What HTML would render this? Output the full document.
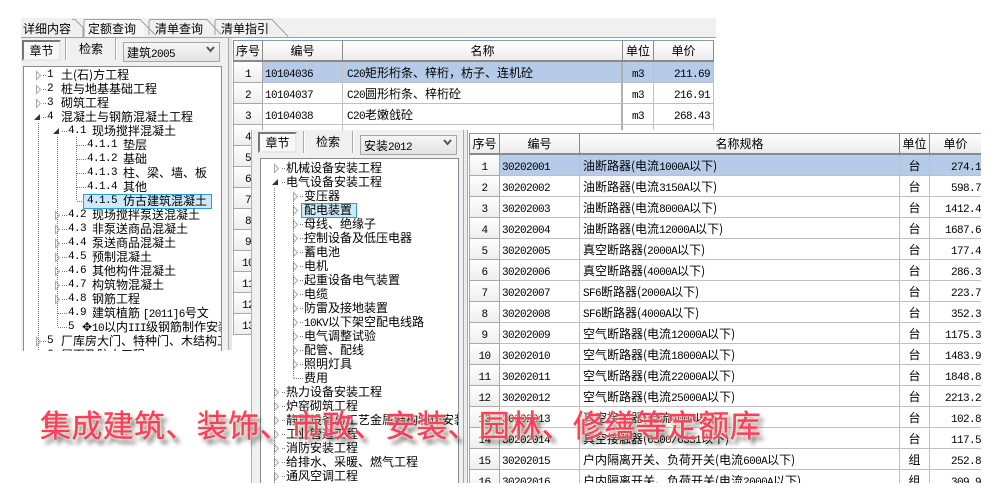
<!DOCTYPE html>
<html lang="zh-CN"><head><meta charset="utf-8"><title>定额库</title>
<style>
html,body{margin:0;padding:0;background:#fff;overflow:hidden}
body{width:1000px;height:500px;position:relative;overflow:hidden;font:12px/14px "WenQuanYi Zen Hei","Noto Sans CJK SC",sans-serif;color:#000}
i{font:11px/14px "Liberation Mono",monospace;letter-spacing:-.6px;color:#000}
.a{position:absolute}
.panel{background:#f0f0f0}
.btn{position:absolute;box-sizing:border-box;height:21px;width:39px;border:2px solid #e8e8e8;border-top-color:#777;border-left-color:#777;background:#f8f8f8;text-align:center;line-height:17px}
.sep{position:absolute;width:1px;height:22px;background:#aaa;border-right:1px solid #fff}
.sel{position:absolute;box-sizing:border-box;width:97px;height:20px;border:1px solid #a5a5a5;background:linear-gradient(#f6f6f6,#e4e4e4);line-height:20px;padding-left:3px}
.sel i{line-height:0}
.box{position:absolute;box-sizing:border-box;width:199px;background:#fff;border:1px solid #838a94;overflow:hidden}
.r{position:relative;height:14px;line-height:14px;white-space:nowrap}
.r b{font-weight:normal;position:absolute;top:0}
.r i{position:absolute;top:0}
.r b i{position:static;line-height:0}
.hl{position:absolute;box-sizing:border-box;background:#cde8f6;border:1px solid #2a9fdc}
table{border-collapse:separate;border-spacing:0;table-layout:fixed;position:absolute}
td{box-sizing:border-box;height:21px;padding:0;border-right:1px solid #c0c0c0;border-bottom:1px solid #c0c0c0;white-space:nowrap;overflow:hidden;line-height:19px}
td i{line-height:0}
tr.h td{background:linear-gradient(#fff,#ececec);text-align:center;border-right:1px solid #8a8a8a;border-bottom:2px solid #8a8a8a;border-top:1px solid #7f9db9}
td.n{background:linear-gradient(#fff,#eee);text-align:center;border-right:1px solid #a8a8a8;border-bottom:1px solid #a8a8a8;border-left:1px solid #a8a8a8}
tr.h td.n{border-left:1px solid #8a8a8a}
td.t{padding-left:2px}
td.c{text-align:center}
td.p{text-align:right;padding-right:3px}
tr.s td:not(.n){background:#b5cbe8}
td.sp{border-right:2px solid #b0b0b0}
#t2 td.p{padding-right:0;border-right:0}
#head{position:absolute;left:40px;top:404px;font:31px/40px "Noto Sans CJK SC",sans-serif;letter-spacing:.35px;color:#fb3b6b;-webkit-text-stroke:.3px #fb3b6b;white-space:nowrap;text-shadow:0 0 2px #fffbc0,0 0 3px #fffbc0,4px 5px 4px rgba(0,0,0,.6)}
</style></head><body>

<!-- window 1 -->
<div class="a panel" style="left:21px;top:18px;width:695px;height:20px"></div>
<div class="a panel" style="left:21px;top:38px;width:207px;height:312px"></div>
<div class="a" style="left:84px;top:20px;width:60px;height:18px;background:#f8f8f8"></div>
<div class="a" style="left:23px;top:22px">详细内容</div>
<div class="a" style="left:88px;top:22px">定额查询</div>
<div class="a" style="left:155px;top:22px">清单查询</div>
<div class="a" style="left:221px;top:22px">清单指引</div>
<svg class="a" style="left:0;top:0" width="1000" height="60"><path d="M21 37.500H716M72 19.500h3l8 8v10M84 37V21q0-1.500 1-1.500h55l16 16M149 35v-13q0-2.500 2-2.500h56l14 15M215 35v-13q0-2.500 2-2.500h55l16 17" fill="none" stroke="#a0a0a0"/></svg>
<div class="btn" style="left:22px;top:40px">章节</div>
<div class="sep" style="left:65px;top:38px"></div>
<div class="a" style="left:79px;top:42px">检索</div>
<div class="sep" style="left:115px;top:38px"></div>
<div class="sel" style="left:123px;top:42px">建筑<i>2005</i></div>
<div class="box" style="left:23px;top:66px;height:285px;border-bottom:0">
<div style="height:1px"></div>
<div class="r"><i style="left:23px">1</i><b style="left:37px">土(石)方工程</b></div>
<div class="r"><i style="left:23px">2</i><b style="left:37px">桩与地基基础工程</b></div>
<div class="r"><i style="left:23px">3</i><b style="left:37px">砌筑工程</b></div>
<div class="r"><i style="left:23px">4</i><b style="left:37px">混凝土与钢筋混凝土工程</b></div>
<div class="r"><i style="left:44px">4.1</i><b style="left:68px">现场搅拌混凝土</b></div>
<div class="r"><i style="left:63px">4.1.1</i><b style="left:99px">垫层</b></div>
<div class="r"><i style="left:63px">4.1.2</i><b style="left:99px">基础</b></div>
<div class="r"><i style="left:63px">4.1.3</i><b style="left:99px">柱、梁、墙、板</b></div>
<div class="r"><i style="left:63px">4.1.4</i><b style="left:99px">其他</b></div>
<div class="hl" style="left:59px;top:127px;width:129px;height:15px"></div>
<div class="r"><i style="left:63px">4.1.5</i><b style="left:99px">仿古建筑混凝土</b></div>
<div class="r"><i style="left:44px">4.2</i><b style="left:68px">现场搅拌泵送混凝土</b></div>
<div class="r"><i style="left:44px">4.3</i><b style="left:68px">非泵送商品混凝土</b></div>
<div class="r"><i style="left:44px">4.4</i><b style="left:68px">泵送商品混凝土</b></div>
<div class="r"><i style="left:44px">4.5</i><b style="left:68px">预制混凝土</b></div>
<div class="r"><i style="left:44px">4.6</i><b style="left:68px">其他构件混凝土</b></div>
<div class="r"><i style="left:44px">4.7</i><b style="left:68px">构筑物混凝土</b></div>
<div class="r"><i style="left:44px">4.8</i><b style="left:68px">钢筋工程</b></div>
<div class="r"><i style="left:44px">4.9</i><b style="left:68px">建筑植筋 <i>[2011]6</i>号文</b></div>
<div class="r"><i style="left:44px">5</i><b style="left:58px">✥</b><b style="left:68px"><i>10</i>以内<i>III</i>级钢筋制作安装</b></div>
<div class="r"><i style="left:23px">5</i><b style="left:37px">厂库房大门、特种门、木结构工程</b></div>
<div class="r"><i style="left:23px">6</i><b style="left:37px">屋面及防水工程</b></div>
</div>
<svg class="a" style="left:0;top:0" width="250" height="352" shape-rendering="crispEdges">
<path d="M36.500 71.500v8l4-4zM36.500 85.500v8l4-4zM36.500 99.500v8l4-4zM36.500 337.500v8l4-4zM55.500 211.500v8l4-4zM55.500 225.500v8l4-4zM55.500 239.500v8l4-4zM55.500 253.500v8l4-4zM55.500 267.500v8l4-4zM55.500 281.500v8l4-4zM55.500 295.500v8l4-4z" fill="#fff" stroke="#a8a8a8" shape-rendering="auto"/>
<path d="M40 114v6h-6zM59 128v6h-6z" fill="#333" shape-rendering="auto"/>
<path d="M38.500 123V350M57.500 137V327M76.500 137V201M43 75.500h4M43 89.500h4M43 103.500h4M43 117.500h4M43 341.500h4M62 131.500h5M62 215.500h5M62 229.500h5M62 243.500h5M62 257.500h5M62 271.500h5M62 285.500h5M62 299.500h5M58 313.500h9M58 327.500h9M77 145.500h9M77 159.500h9M77 173.500h9M77 187.500h9M77 201.500h6" fill="none" stroke="#777" stroke-dasharray="1 1"/>
</svg>

<div class="a" style="left:228px;top:38px;width:4px;height:312px;background:#e6e6e6;border-left:1px solid #a8a8a8;box-sizing:border-box"></div>

<table style="left:233px;top:40px;width:481px">
<colgroup><col width="30"><col width="80"><col width="280"><col width="31"><col width="60"></colgroup>
<tr class="h" style="height:22px"><td class="n" style="height:22px">序号</td><td style="height:22px">编号</td><td style="height:22px">名称</td><td style="height:22px">单位</td><td style="height:22px">单价</td></tr>
<tr class="s"><td class="n"><i>1</i></td><td class="t"><i>10104036</i></td><td class="t sp" style="padding-left:4px"><i>C20</i>矩形桁条、梓桁，枋子、连机砼</td><td class="c"><i>m3</i></td><td class="p"><i>211.69</i></td></tr>
<tr><td class="n"><i>2</i></td><td class="t"><i>10104037</i></td><td class="t sp" style="padding-left:4px"><i>C20</i>圆形桁条、梓桁砼</td><td class="c"><i>m3</i></td><td class="p"><i>216.91</i></td></tr>
<tr><td class="n"><i>3</i></td><td class="t"><i>10104038</i></td><td class="t sp" style="padding-left:4px"><i>C20</i>老嫩戗砼</td><td class="c"><i>m3</i></td><td class="p"><i>268.43</i></td></tr>
<tr><td class="n"><i>4</i></td><td class="t"></td><td class="t sp"></td><td></td><td></td></tr>
<tr><td class="n"><i>5</i></td><td colspan="4" style="border:0"></td></tr>
<tr><td class="n"><i>6</i></td><td colspan="4" style="border:0"></td></tr>
<tr><td class="n"><i>7</i></td><td colspan="4" style="border:0"></td></tr>
<tr><td class="n"><i>8</i></td><td colspan="4" style="border:0"></td></tr>
<tr><td class="n"><i>9</i></td><td colspan="4" style="border:0"></td></tr>
<tr><td class="n"><i>10</i></td><td colspan="4" style="border:0"></td></tr>
<tr><td class="n"><i>11</i></td><td colspan="4" style="border:0"></td></tr>
<tr><td class="n"><i>12</i></td><td colspan="4" style="border:0"></td></tr>
<tr><td class="n"><i>13</i></td><td colspan="4" style="border:0"></td></tr>
</table>

<!-- window 2 -->
<div class="a" style="left:251px;top:130px;width:730px;height:353px;background:#fff;overflow:hidden"></div>
<div class="a panel" style="left:251px;top:130px;width:217px;height:353px;border-left:1px solid #b0b0b0;box-sizing:border-box"></div>
<div class="btn" style="left:258px;top:132px">章节</div>
<div class="sep" style="left:303px;top:131px"></div>
<div class="a" style="left:316px;top:135px">检索</div>
<div class="sep" style="left:352px;top:131px"></div>
<div class="sel" style="left:360px;top:135px">安装<i>2012</i></div>
<div class="box" style="left:260px;top:158px;height:325px;border-bottom:0">
<div style="height:2px"></div>
<div class="r"><b style="left:25px">机械设备安装工程</b></div>
<div class="r"><b style="left:25px">电气设备安装工程</b></div>
<div class="r"><b style="left:43px">变压器</b></div>
<div class="hl" style="left:40px;top:44px;width:56px;height:15px"></div>
<div class="r"><b style="left:43px">配电装置</b></div>
<div class="r"><b style="left:43px">母线、绝缘子</b></div>
<div class="r"><b style="left:43px">控制设备及低压电器</b></div>
<div class="r"><b style="left:43px">蓄电池</b></div>
<div class="r"><b style="left:43px">电机</b></div>
<div class="r"><b style="left:43px">起重设备电气装置</b></div>
<div class="r"><b style="left:43px">电缆</b></div>
<div class="r"><b style="left:43px">防雷及接地装置</b></div>
<div class="r"><b style="left:43px"><i>10KV</i>以下架空配电线路</b></div>
<div class="r"><b style="left:43px">电气调整试验</b></div>
<div class="r"><b style="left:43px">配管、配线</b></div>
<div class="r"><b style="left:43px">照明灯具</b></div>
<div class="r"><b style="left:43px">费用</b></div>
<div class="r"><b style="left:25px">热力设备安装工程</b></div>
<div class="r"><b style="left:25px">炉窑砌筑工程</b></div>
<div class="r"><b style="left:25px">静置设备与工艺金属结构制作安装工程</b></div>
<div class="r"><b style="left:25px">工业管道工程</b></div>
<div class="r"><b style="left:25px">消防安装工程</b></div>
<div class="r"><b style="left:25px">给排水、采暖、燃气工程</b></div>
<div class="r"><b style="left:25px">通风空调工程</b></div>
</div>
<svg class="a" style="left:0;top:0" width="480" height="484" shape-rendering="crispEdges">
<path d="M274.500 164.500v8l4-4zM274.500 388.500v8l4-4zM274.500 402.500v8l4-4zM274.500 416.500v8l4-4zM274.500 430.500v8l4-4zM274.500 444.500v8l4-4zM274.500 458.500v8l4-4zM274.500 472.500v8l4-4zM293.500 192.500v8l4-4zM293.500 206.500v8l4-4zM293.500 220.500v8l4-4zM293.500 234.500v8l4-4zM293.500 248.500v8l4-4zM293.500 262.500v8l4-4zM293.500 276.500v8l4-4zM293.500 290.500v8l4-4zM293.500 304.500v8l4-4zM293.500 318.500v8l4-4zM293.500 332.500v8l4-4zM293.500 346.500v8l4-4zM293.500 360.500v8l4-4z" fill="#fff" stroke="#a8a8a8" shape-rendering="auto"/>
<path d="M278 179v6h-6z" fill="#333" shape-rendering="auto"/>
<path d="M274.500 188V483M293.500 201V378M282 168.500h3M282 182.500h3M282 392.500h3M282 406.500h3M282 420.500h3M282 434.500h3M282 448.500h3M282 462.500h3M282 476.500h3M300 196.500h3M300 224.500h3M300 238.500h3M300 252.500h3M300 266.500h3M300 280.500h3M300 294.500h3M300 308.500h3M300 322.500h3M300 336.500h3M300 350.500h3M300 364.500h3M294 378.500h9" fill="none" stroke="#777" stroke-dasharray="1 1"/>
</svg>
<div class="a" style="left:463px;top:130px;width:5px;height:353px;background:#ececec;border-left:1px solid #a8a8a8;border-right:1px solid #a8a8a8;box-sizing:border-box"></div>

<div class="a" style="left:469px;top:133px;width:512px;height:350px;overflow:hidden">
<table id="t2" style="left:0;top:0;width:512px">
<colgroup><col width="31"><col width="80"><col width="320"><col width="30"><col width="51"></colgroup>
<tr class="h"><td class="n" style="height:22px">序号</td><td style="height:22px">编号</td><td style="height:22px">名称规格</td><td style="height:22px">单位</td><td style="height:22px;border-right:0">单价</td></tr>
<tr class="s"><td class="n"><i>1</i></td><td class="t"><i>30202001</i></td><td class="t" style="padding-left:3px">油断路器(电流<i>1000A</i>以下)</td><td class="c">台</td><td class="p"><i>274.1</i></td></tr>
<tr><td class="n"><i>2</i></td><td class="t"><i>30202002</i></td><td class="t" style="padding-left:3px">油断路器(电流<i>3150A</i>以下)</td><td class="c">台</td><td class="p"><i>598.7</i></td></tr>
<tr><td class="n"><i>3</i></td><td class="t"><i>30202003</i></td><td class="t" style="padding-left:3px">油断路器(电流<i>8000A</i>以下)</td><td class="c">台</td><td class="p"><i>1412.4</i></td></tr>
<tr><td class="n"><i>4</i></td><td class="t"><i>30202004</i></td><td class="t" style="padding-left:3px">油断路器(电流<i>12000A</i>以下)</td><td class="c">台</td><td class="p"><i>1687.6</i></td></tr>
<tr><td class="n"><i>5</i></td><td class="t"><i>30202005</i></td><td class="t" style="padding-left:3px">真空断路器(<i>2000A</i>以下)</td><td class="c">台</td><td class="p"><i>177.4</i></td></tr>
<tr><td class="n"><i>6</i></td><td class="t"><i>30202006</i></td><td class="t" style="padding-left:3px">真空断路器(<i>4000A</i>以下)</td><td class="c">台</td><td class="p"><i>286.3</i></td></tr>
<tr><td class="n"><i>7</i></td><td class="t"><i>30202007</i></td><td class="t" style="padding-left:3px"><i>SF6</i>断路器(<i>2000A</i>以下)</td><td class="c">台</td><td class="p"><i>223.7</i></td></tr>
<tr><td class="n"><i>8</i></td><td class="t"><i>30202008</i></td><td class="t" style="padding-left:3px"><i>SF6</i>断路器(<i>4000A</i>以下)</td><td class="c">台</td><td class="p"><i>352.3</i></td></tr>
<tr><td class="n"><i>9</i></td><td class="t"><i>30202009</i></td><td class="t" style="padding-left:3px">空气断路器(电流<i>12000A</i>以下)</td><td class="c">台</td><td class="p"><i>1175.3</i></td></tr>
<tr><td class="n"><i>10</i></td><td class="t"><i>30202010</i></td><td class="t" style="padding-left:3px">空气断路器(电流<i>18000A</i>以下)</td><td class="c">台</td><td class="p"><i>1483.9</i></td></tr>
<tr><td class="n"><i>11</i></td><td class="t"><i>30202011</i></td><td class="t" style="padding-left:3px">空气断路器(电流<i>22000A</i>以下)</td><td class="c">台</td><td class="p"><i>1848.8</i></td></tr>
<tr><td class="n"><i>12</i></td><td class="t"><i>30202012</i></td><td class="t" style="padding-left:3px">空气断路器(电流<i>25000A</i>以下)</td><td class="c">台</td><td class="p"><i>2213.2</i></td></tr>
<tr><td class="n"><i>13</i></td><td class="t"><i>30202013</i></td><td class="t" style="padding-left:3px">真空接触器(电流<i>400A</i>以下)</td><td class="c">台</td><td class="p"><i>102.8</i></td></tr>
<tr><td class="n"><i>14</i></td><td class="t"><i>30202014</i></td><td class="t" style="padding-left:3px">真空接触器(<i>6300/6331</i>以下)</td><td class="c">台</td><td class="p"><i>117.5</i></td></tr>
<tr><td class="n"><i>15</i></td><td class="t"><i>30202015</i></td><td class="t" style="padding-left:3px">户内隔离开关、负荷开关(电流<i>600A</i>以下)</td><td class="c">组</td><td class="p"><i>252.8</i></td></tr>
<tr><td class="n"><i>16</i></td><td class="t"><i>30202016</i></td><td class="t" style="padding-left:3px">户内隔离开关、负荷开关(电流<i>2000A</i>以下)</td><td class="c">组</td><td class="p"><i>309.9</i></td></tr>
</table>
</div>

<svg class="a" style="left:0;top:0" width="480" height="160"><path d="M207 47l3.500 4 3.500-4M444 140l3.500 4 3.500-4" fill="none" stroke="#555" stroke-width="2"/></svg>

<div id="head">集成建筑、装饰、市政、安装、园林、修缮等定额库</div>
</body></html>
